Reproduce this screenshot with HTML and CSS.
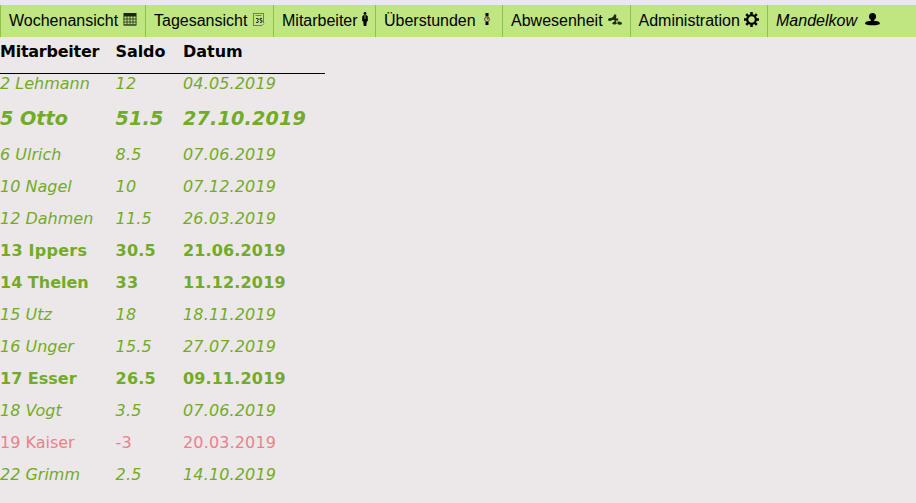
FILE: index.html
```html
<!DOCTYPE html>
<html lang="de">
<head>
<meta charset="utf-8">
<title>Überstunden</title>
<link rel="stylesheet" href="styles.css">
</head>
<body>
<nav class="menu">
  <a class="item week">Wochenansicht
    <svg class="icon" width="14" height="14" viewBox="0 0 14 14"><path d="M.5 0h13v3.500H.5z" fill="#1c2411"/><path d="M1 3v9h12V3M4 3v9M7 3v9M10 3v9M.5 6h13M.5 9h13M.5 12h13" fill="none" stroke="#2c381d" stroke-width=".9"/></svg></a>
  <a class="item day">Tagesansicht
    <svg class="icon" width="12" height="14" viewBox="0 0 12 14"><path d="M.5 0v12.500M.5 .5h10.500M10.500 .5v9.500M0 12.500h9M2.500 2.500h6M9 12.500l2-2" fill="none" stroke="#62784a" stroke-width=".9"/><path d="M3 5.500h2l.5 1L4 7.500l1.500 1-.5 1H3M9 5.500H7V7l2 .5V9l-2 .5" fill="none" stroke="#24301a"/></svg></a>
  <a class="item staff">Mitarbeiter
    <svg class="icon" width="6" height="15" viewBox="0 0 6 15"><circle cx="3" cy="1.500" r="1.400"/><path d="M1.200 3.200h3.600l1 1.200V9l-1 .500-.5 4.500H1.700L1.200 9.500.2 9V4.400z"/><path d="M3 3.500V7" stroke="#a9c97a" stroke-width=".8"/></svg></a>
  <a class="item overtime">Überstunden
    <svg class="icon" width="6" height="13" viewBox="0 0 6 13"><path d="M1.500 0h3v3.500h-3zM1.500 9h3v3h-3z"/><circle cx="3" cy="6.300" r="2.400" fill="#bfd99a" stroke="#424f2d"/><path d="M3 6.500l1.700-2" stroke="#d92020" stroke-width="1.300"/></svg></a>
  <a class="item absence">Abwesenheit
    <svg class="icon" width="14" height="12" viewBox="0 0 14 12"><g fill="#202817"><ellipse cx="2" cy="5.500" rx="2" ry="1.500"/><path d="M2 4.500l3-1.500 1.200-2.500h2V10H6.500V6H3z"/><ellipse cx="6.500" cy="9.200" rx="2" ry="1.400"/><path d="M8 4.500h2.200v2H8z"/><ellipse cx="11.800" cy="9.300" rx="2.100" ry="1.500"/><path d="M9.500 7.500h2v2h-2z"/></g></svg></a>
  <a class="item admin">Administration
    <svg class="icon" width="15" height="15" viewBox="0 0 15 15"><circle cx="7.500" cy="7.500" r="4.300" fill="none" stroke="#000" stroke-width="2.200"/><path d="M7.500 0v3M7.500 12v3M0 7.500h3M12 7.500h3M2.200 2.200l2 2M10.800 10.800l2 2M12.800 2.200l-2 2M4.200 10.800l-2 2" stroke="#000" stroke-width="2.500"/></svg></a>
  <a class="item user">Mandelkow
    <svg class="icon" width="15" height="13" viewBox="0 0 15 13"><ellipse cx="7.500" cy="3.500" rx="3.500" ry="3.500"/><path d="M6 6h3v1.800c3.400.1 5.900 1.200 5.900 2.600 0 1.200-2.900 1.800-7.400 1.800s-7.400-.6-7.400-1.800C.1 9 2.600 7.900 6 7.800z"/></svg></a>
</nav>
<table class="balance">
  <colgroup><col class="c-name"><col class="c-saldo"><col class="c-date"></colgroup>
  <thead><tr><th class="tight">Mitarbeiter</th><th>Saldo</th><th>Datum</th></tr></thead>
  <tbody>
    <tr class="plus first"><td>2 Lehmann</td><td>12</td><td>04.05.2019</td></tr>
    <tr class="huge"><td>5 Otto</td><td>51.5</td><td>27.10.2019</td></tr>
    <tr class="plus"><td>6 Ulrich</td><td>8.5</td><td>07.06.2019</td></tr>
    <tr class="plus"><td>10 Nagel</td><td>10</td><td>07.12.2019</td></tr>
    <tr class="plus"><td>12 Dahmen</td><td>11.5</td><td>26.03.2019</td></tr>
    <tr class="high loose"><td>13 Ippers</td><td>30.5</td><td>21.06.2019</td></tr>
    <tr class="high"><td>14 Thelen</td><td>33</td><td>11.12.2019</td></tr>
    <tr class="plus"><td>15 Utz</td><td>18</td><td>18.11.2019</td></tr>
    <tr class="plus"><td>16 Unger</td><td>15.5</td><td>27.07.2019</td></tr>
    <tr class="high"><td>17 Esser</td><td>26.5</td><td>09.11.2019</td></tr>
    <tr class="plus"><td>18 Vogt</td><td>3.5</td><td>07.06.2019</td></tr>
    <tr class="minus"><td>19 Kaiser</td><td>-3</td><td>20.03.2019</td></tr>
    <tr class="plus"><td>22 Grimm</td><td>2.5</td><td>14.10.2019</td></tr>
  </tbody>
</table>
</body>
</html>
```
FILE: styles.css
```css
* { box-sizing: border-box; }
body { margin: 0; padding-top: 5px; height: 503px; overflow: hidden; background: #ece8e9; font-family: Verdana, "DejaVu Sans", sans-serif; font-size: 16px; }
.menu { display: flex; height: 32px; background: #bfe681; font-family: "Liberation Sans", Arial, sans-serif; border-left: 1px solid #8fc04a; }
.item { display: flex; justify-content: space-between; padding: 0 8px; line-height: 32px; border-right: 1px solid #8fc04a; white-space: nowrap; color: #000; }
.icon { display: block; flex: none; margin-top: 8px; }
.week { width: 145px; }
.day { width: 128px; }
.staff { width: 102px; padding-right: 7px; }
.staff .icon { margin-top: 7px; }
.overtime { width: 127px; padding-right: 12px; }
.absence { width: 128px; padding-right: 8px; }
.absence .icon { margin-top: 9px; }
.admin { width: 137px; padding-left: 7.5px; }
.admin .icon { margin-top: 7px; }
.user { width: 148px; padding-right: 36px; border-right: 0; font-style: italic; }
.balance { width: 325px; table-layout: fixed; border-collapse: separate; border-spacing: 0; }
.c-name { width: 115px; }
.c-saldo { width: 68px; }
.c-date { width: 142px; }
th, td { padding: 7px 0 0; height: 32px; line-height: 20px; text-align: left; vertical-align: top; white-space: nowrap; }
th { height: 37px; padding-top: 5px; border-bottom: 1px solid #000; font-weight: bold; }
.tight { letter-spacing: -.25px; }
th:nth-child(2), td:nth-child(2) { padding-left: .6px; }
th:nth-child(2) { letter-spacing: -.1px; }
td:nth-child(2), td:nth-child(3) { letter-spacing: .15px; }
.plus { color: #72ab26; font-style: italic; }
.first td { height: 28px; padding-top: 0; }
.huge { color: #72ab26; font-size: 19.2px; font-weight: bold; font-style: italic; }
.huge td { height: 36px; }
.high { color: #72ab26; font-weight: bold; }
.loose td:first-child { letter-spacing: .25px; }
.minus { color: #e9818b; }
```
